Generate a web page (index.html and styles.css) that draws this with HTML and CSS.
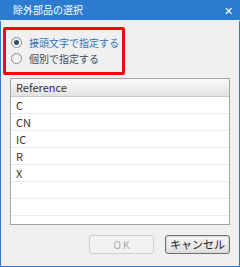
FILE: index.html
```html
<!DOCTYPE html>
<html lang="ja">
<head>
  <title>除外部品の選択</title>
  <link rel="stylesheet" href="styles.css">
</head>
<body>
  <div class="dialog">
    <div class="titlebar">
      <span class="title">除外部品の選択</span>
      <span class="close">✕</span>
    </div>

    <div class="content">
      <div class="options">
        <label class="option selected"><span class="radio checked"></span>接頭文字で指定する</label>
        <label class="option"><span class="radio"></span>個別で指定する</label>
      </div>

      <div class="list">
        <div class="list-head">Reference</div>
        <div class="row">C</div>
        <div class="row">CN</div>
        <div class="row">IC</div>
        <div class="row">R</div>
        <div class="row">X</div>
        <div class="row"></div>
        <div class="row"></div>
        <div class="row"></div>
      </div>

      <div class="buttons">
        <button class="btn" disabled>O K</button>
        <button class="btn default">キャンセル</button>
      </div>
    </div>
  </div>
</body>
</html>
```

FILE: styles.css
```css
body {
  margin: 0;
  font-family: "Noto Sans CJK JP", "Noto Sans", sans-serif;
  font-size: 11px;
  color: #222;
}

.dialog {
  width: 240px;
  height: 267px;
  box-sizing: border-box;
  border: 1px solid #2b7bd1;
  border-top: none;
  background: #f0f0f0;
  display: flex;
  flex-direction: column;
}

.titlebar {
  height: 20px;
  margin: 0 -1px;
  background: #2b7bd1;
  color: #fff;
  display: flex;
  align-items: center;
  justify-content: space-between;
  padding: 0 7px 0 13px;
  border-bottom: 1px solid #e6eef8;
}

.title {
  font-size: 10px;
  line-height: 20px;
}

.close {
  font-size: 11px;
}

.content {
  flex: 1;
  display: flex;
  flex-direction: column;
  padding: 6px 9px 0 2px;
}

.options {
  width: 116px;
  height: 38px;
  border: 3px solid #f00a0a;
  border-radius: 2px;
  padding: 4px 0 0 0;
  display: flex;
  flex-direction: column;
}

.option {
  display: flex;
  align-items: center;
  height: 16px;
  padding-left: 5px;
  font-size: 10px;
  white-space: nowrap;
  color: #3a4a5c;
}

.option.selected {
  color: #2f74c0;
}

.radio {
  flex: none;
  width: 11px;
  height: 11px;
  border-radius: 50%;
  border: 1px solid #8a8a8a;
  background: linear-gradient(#e8e8e8, #fafafa);
  margin-right: 7px;
  box-sizing: border-box;
  position: relative;
}

.radio.checked::after {
  content: "";
  position: absolute;
  left: 2px;
  top: 2px;
  width: 5px;
  height: 5px;
  border-radius: 50%;
  background: #2a4e7a;
}

.list {
  margin: 3px 0 0 7px;
  width: 220px;
  height: 147px;
  box-sizing: border-box;
  border: 1px solid #a4a4a4;
  background: #fff;
  overflow: hidden;
}

.list-head {
  height: 17px;
  line-height: 17px;
  padding-left: 5px;
  background: linear-gradient(#fafafa, #e2e2e2);
  border-bottom: 1px solid #c8c8c8;
  color: #333;
}

.row {
  height: 16px;
  line-height: 16px;
  padding-left: 5px;
  border-bottom: 1px solid #ececec;
  color: #333;
}

.buttons {
  display: flex;
  justify-content: flex-end;
  gap: 11px;
  margin-top: 10px;
}

.btn {
  width: 65px;
  height: 19px;
  padding: 0;
  font-family: inherit;
  font-size: 11px;
  line-height: 17px;
  border: 1px solid #a8a8a8;
  border-radius: 3px;
  background: linear-gradient(#f6f6f6, #dedede);
  color: #222;
}

.btn:disabled {
  border-color: #cfcfcf;
  background: #f2f2f2;
  color: #a8a8a8;
  font-size: 10px;
}

.btn.default {
  border-color: #707070;
  box-shadow: inset 0 0 0 1px #d8d8d8;
}
```
